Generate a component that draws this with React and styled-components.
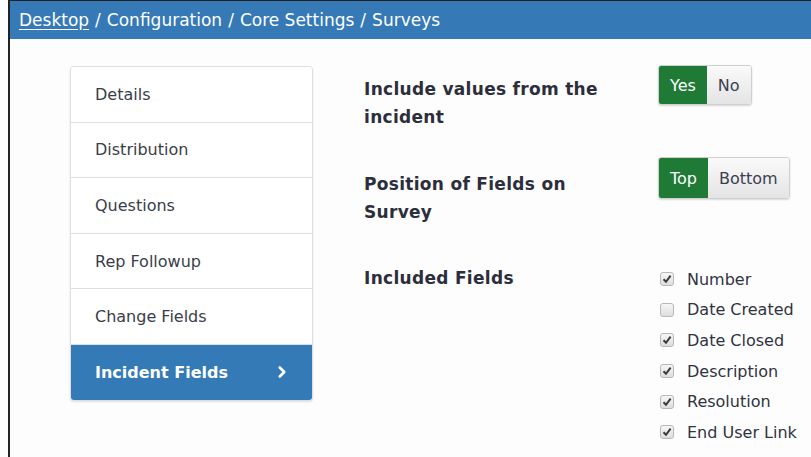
import styled, { createGlobalStyle } from "styled-components";
import { ChevronRight } from "lucide-react";

const GlobalStyle = createGlobalStyle`
  html, body {
    margin: 0;
    padding: 0;
    background: #fdfdfd;
  }
  body {
    font-family: "DejaVu Sans", Verdana, sans-serif;
    color: #2f3240;
  }
`;

const Frame = styled.div`
  margin-left: 8px;
  min-height: 457px;
  border-left: 2px solid #222;
  border-top: 1px solid #222;
  box-sizing: border-box;
`;

const Breadcrumb = styled.div`
  height: 38px;
  background: #3579b6;
  color: #fff;
  font-size: 17px;
  display: flex;
  align-items: center;
  padding-left: 9px;
  gap: 6px;
`;

const Crumb = styled.span`
  text-decoration: ${(p) => (p.$link ? "underline" : "none")};
  text-underline-offset: 3px;
`;

const Body = styled.div`
  display: flex;
  align-items: flex-start;
  padding: 27px 0 0 60px;
  gap: 51px;
`;

const SideNav = styled.div`
  width: 243px;
  box-sizing: border-box;
  border: 1px solid #dcdfe3;
  border-radius: 4px;
  background: #fff;
  box-shadow: 0 1px 2px rgba(0, 0, 0, 0.12);
  overflow: hidden;
`;

const NavItem = styled.div`
  height: 54.6px;
  display: flex;
  align-items: center;
  justify-content: space-between;
  padding: 0 21px 0 24px;
  font-size: 16px;
  border-top: ${(p) => (p.$first ? "none" : "1px solid #dcdfe3")};
  background: ${(p) => (p.$active ? "#337ab7" : "#fff")};
  color: ${(p) => (p.$active ? "#fff" : "#3a3d48")};
  font-weight: ${(p) => (p.$active ? "bold" : "normal")};
`;

const Form = styled.div`
  display: flex;
  flex-direction: column;
  gap: 26px;
  margin-top: -1px;
`;

const Row = styled.div`
  display: flex;
  align-items: flex-start;
`;

const Label = styled.div`
  width: 294px;
  padding-top: ${(p) => p.$top || 10}px;
  font-size: 17px;
  font-weight: bold;
  line-height: 28px;
  letter-spacing: 0.3px;
  color: #2c2f3b;
`;

const Toggle = styled.div`
  display: flex;
  height: ${(p) => p.$h}px;
  border: 1px solid #cfcfcf;
  border-radius: 3px;
  overflow: hidden;
  box-shadow: 0 1px 2px rgba(0, 0, 0, 0.15);
`;

const ToggleOption = styled.div`
  display: flex;
  align-items: center;
  padding: 0 11px;
  font-size: 16px;
  background: ${(p) =>
    p.$on ? "#1f7a36" : "linear-gradient(#fafafa, #e4e4e4)"};
  color: ${(p) => (p.$on ? "#fff" : "#3b3e52")};
`;

const CheckList = styled.div`
  padding-top: 12px;
  display: flex;
  flex-direction: column;
`;

const CheckRow = styled.div`
  height: 30.6px;
  display: flex;
  align-items: center;
  gap: 13px;
  font-size: 16px;
  color: #30333f;
`;

const Box = styled.span`
  width: 14px;
  height: 14px;
  box-sizing: border-box;
  margin-left: 2px;
  border: 1px solid #b8b8b8;
  border-radius: 3px;
  background: linear-gradient(#f6f6f6, #dedede);
  display: flex;
  align-items: center;
  justify-content: center;
`;

const navItems = [
  "Details",
  "Distribution",
  "Questions",
  "Rep Followup",
  "Change Fields",
  "Incident Fields",
];

const fields = [
  { name: "Number", checked: true },
  { name: "Date Created", checked: false },
  { name: "Date Closed", checked: true },
  { name: "Description", checked: true },
  { name: "Resolution", checked: true },
  { name: "End User Link", checked: true },
];

const Checkbox = ({ checked }) => (
  <Box>
    {checked && (
      <svg width="10" height="10" viewBox="0 0 10 10">
        <path
          d="M1.5 5.2 L4 7.8 L8.6 1.6"
          fill="none"
          stroke="#3a3a3a"
          strokeWidth="2"
        />
      </svg>
    )}
  </Box>
);

const App = () => {
  return (
    <>
      <GlobalStyle />
      <Frame>
        <Breadcrumb>
          <Crumb $link>Desktop</Crumb>/<Crumb>Configuration</Crumb>/
          <Crumb>Core Settings</Crumb>/<Crumb>Surveys</Crumb>
        </Breadcrumb>
        <Body>
          <SideNav>
            {navItems.map((item, i) => (
              <NavItem
                key={item}
                $first={i === 0}
                $active={item === "Incident Fields"}
              >
                {item}
                {item === "Incident Fields" && (
                  <ChevronRight size={18} strokeWidth={3.5} />
                )}
              </NavItem>
            ))}
          </SideNav>
          <Form>
            <Row>
              <Label>
                Include values from the
                <br />
                incident
              </Label>
              <Toggle $h={38}>
                <ToggleOption $on>Yes</ToggleOption>
                <ToggleOption>No</ToggleOption>
              </Toggle>
            </Row>
            <Row>
              <Label $top={13}>
                Position of Fields on
                <br />
                Survey
              </Label>
              <Toggle $h={40}>
                <ToggleOption $on>Top</ToggleOption>
                <ToggleOption>Bottom</ToggleOption>
              </Toggle>
            </Row>
            <Row>
              <Label $top={12}>Included Fields</Label>
              <CheckList>
                {fields.map((f) => (
                  <CheckRow key={f.name}>
                    <Checkbox checked={f.checked} />
                    {f.name}
                  </CheckRow>
                ))}
              </CheckList>
            </Row>
          </Form>
        </Body>
      </Frame>
    </>
  );
};

export default App;
